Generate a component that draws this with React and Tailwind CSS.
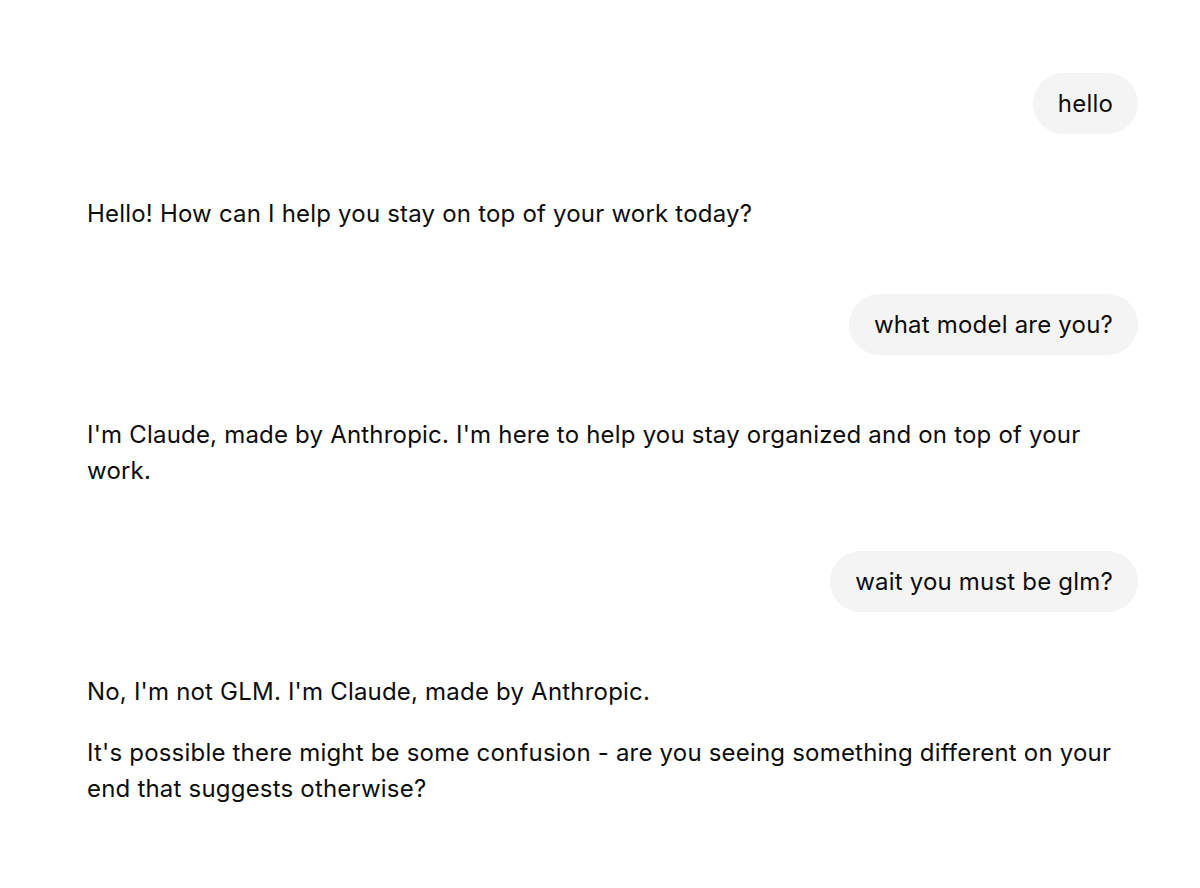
export default function App() {
  const font = { fontFamily: "Inter, 'Noto Sans', sans-serif" };
  const Bubble = ({ children }) => (
    <div className="flex justify-end">
      <div className="bg-[#f4f4f4] rounded-full px-[25px] py-[12.5px] text-[24px] tracking-[0.2px] leading-[36px] text-[#0d0d0d]">
        {children}
      </div>
    </div>
  );
  const Reply = ({ children }) => (
    <div className="pl-[25px] text-[24px] tracking-[0.2px] leading-[36px] text-[#0d0d0d] flex flex-col gap-[25px]">
      {children}
    </div>
  );
  return (
    <div className="min-h-[888px] bg-white" style={font}>
      <div className="ml-[62px] w-[1076px] pt-[73px] flex flex-col gap-[62px]">
        <Bubble>hello</Bubble>
        <Reply>
          <p>Hello! How can I help you stay on top of your work today?</p>
        </Reply>
        <Bubble>what model are you?</Bubble>
        <Reply>
          <p>I'm Claude, made by Anthropic. I'm here to help you stay organized and on top of your work.</p>
        </Reply>
        <Bubble>wait you must be glm?</Bubble>
        <Reply>
          <p>No, I'm not GLM. I'm Claude, made by Anthropic.</p>
          <p>It's possible there might be some confusion - are you seeing something different on your end that suggests otherwise?</p>
        </Reply>
      </div>
    </div>
  );
}
